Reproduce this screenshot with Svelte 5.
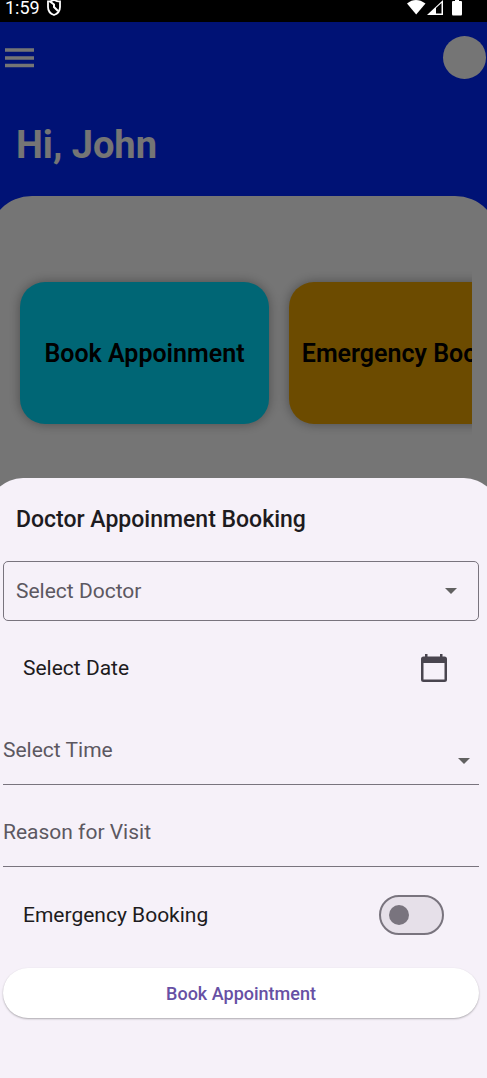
<script>
  let doctor = $state('');
  let time = $state('');
  let reason = $state('');
  let emergency = $state(false);

  const cards = [
    { label: 'Book Appoinment', tone: 'cyan' },
    { label: 'Emergency Booking', tone: 'amber' }
  ];
</script>

<div class="app">
  <div class="status">
    <span>1:59</span>
    <svg class="shield" width="14" height="16" viewBox="0 0 14 16" aria-hidden="true">
      <path d="M1 1.5 Q4 1.5 7 0 Q10 1.5 13 1.5 V7 C13 11 10.5 13.8 7 15 C3.500 13.800 1 11 1 7 Z" fill="none" stroke="#fff" stroke-width="1.800" />
      <path d="M3 1.500 L7 4.500 V7 L11 11" fill="none" stroke="#fff" stroke-width="2" />
    </svg>
    <svg class="signals" width="56" height="16" viewBox="0 0 56 16" aria-hidden="true">
      <path d="M0 3.500 C3 1 6 0 9 0 C12 0 15 1 18.500 3.500 L9.200 14.500 Z" fill="#fff" />
      <path d="M20 15 L36 0 V15 Z" fill="#fff" />
      <path d="M29 8 L34.500 3 V13.500 H29 Z" fill="#000" />
      <path d="M46 1 H48 V0 H52 V1 H54 Q55 1 55 2 V14 Q55 15.500 54 15.500 H46 Q45 15.500 45 14 V2 Q45 1 46 1 Z" fill="#fff" />
    </svg>
  </div>

  <div class="home">
    <header>
      <div class="bar">
        <button class="menu" aria-label="Menu">
          <svg width="29" height="20" viewBox="0 0 29 20" aria-hidden="true">
            <path d="M0 2 H29 M0 10 H29 M0 17.500 H29" stroke="#fff" stroke-width="3.500" />
          </svg>
        </button>
        <button class="avatar" aria-label="Profile"></button>
      </div>
      <h1>Hi, John</h1>
    </header>
    <main>
      <div class="cards">
        {#each cards as card}
          <button class="card {card.tone}">{card.label}</button>
        {/each}
      </div>
    </main>
    <div class="scrim"></div>
  </div>

  <form class="sheet" onsubmit={(e) => e.preventDefault()}>
    <h2>Doctor Appoinment Booking</h2>

    <div class="field outlined">
      <select aria-label="Select Doctor" bind:value={doctor}>
        <option value="">Select Doctor</option>
      </select>
      <svg width="12" height="6" viewBox="0 0 12 6" aria-hidden="true"><path d="M0 0 H12 L6 6 Z" fill="#616161" /></svg>
    </div>

    <button type="button" class="row">
      <span>Select Date</span>
      <svg width="26" height="28" viewBox="0 0 26 28" aria-hidden="true">
        <path fill-rule="evenodd" d="M4 0 H6.500 V2.500 H19 V0 H21.500 V2.500 H23.500 Q26 2.500 26 5 V25.500 Q26 28 23.500 28 H2.500 Q0 28 0 25.500 V5 Q0 2.500 2.500 2.500 H4 Z M2.500 9 V25.500 H23.500 V9 Z" fill="#49454f" />
      </svg>
    </button>

    <div class="field lined time">
      <select aria-label="Select Time" bind:value={time}>
        <option value="">Select Time</option>
      </select>
      <svg width="12" height="6" viewBox="0 0 12 6" aria-hidden="true"><path d="M0 0 H12 L6 6 Z" fill="#616161" /></svg>
    </div>

    <div class="field lined">
      <input type="text" aria-label="Reason for Visit" placeholder="Reason for Visit" bind:value={reason} />
    </div>

    <label class="row toggle">
      <span>Emergency Booking</span>
      <input type="checkbox" role="switch" bind:checked={emergency} />
    </label>

    <button class="submit">Book Appointment</button>
  </form>
</div>

<style>
  :global(body) {
    margin: 0;
    background: #757575;
  }
  .app {
    position: relative;
    display: flex;
    flex-direction: column;
    min-height: 100vh;
    overflow: hidden;
    font-family: Roboto, sans-serif;
    font-size: 21px;
    color: #1d1b20;
  }
  .app * {
    box-sizing: border-box;
  }
  button,
  select,
  input {
    margin: 0;
    padding: 0;
    border: 0;
    background: none;
    font: inherit;
    color: inherit;
  }
  svg {
    display: block;
    flex: none;
  }
  .status {
    display: flex;
    align-items: flex-start;
    height: 22px;
    padding: 0 24px 0 5px;
    background: #000;
    color: #fff;
    font-size: 18px;
    line-height: 16px;
  }
  .shield {
    margin-left: 7px;
  }
  .signals {
    margin-left: auto;
  }
  .home {
    position: relative;
    flex: 1;
    display: flex;
    flex-direction: column;
    background: #0029ff;
  }
  header {
    padding: 14px 1px 27px 5px;
    color: #fff;
  }
  .bar {
    display: flex;
    align-items: center;
    justify-content: space-between;
  }
  .avatar {
    width: 43px;
    height: 43px;
    border-radius: 50%;
    background: #fff;
  }
  h1 {
    margin: 42px 0 0 11px;
    font-size: 38px;
    line-height: 48px;
    font-weight: 700;
  }
  main {
    flex: 1;
    margin: 0 -12px;
    padding: 66px 27px 0 20px;
    border-radius: 44px 44px 0 0;
    background: #fff;
  }
  .cards {
    display: flex;
    gap: 20px;
    padding: 20px 12px;
    overflow: hidden;
  }
  .card {
    flex: none;
    width: 249px;
    height: 142px;
    border-radius: 25px;
    box-shadow: 0 0 12px rgba(0, 0, 0, 0.35);
    color: #000;
    font-size: 25px;
    font-weight: 600;
    white-space: nowrap;
  }
  .cyan {
    background: #00dfff;
  }
  .amber {
    background: #eca400;
  }
  .scrim {
    position: absolute;
    inset: 0;
    background: rgba(0, 0, 0, 0.54);
  }
  .sheet {
    position: absolute;
    left: -12px;
    right: -12px;
    bottom: 0;
    display: flex;
    flex-direction: column;
    padding: 27px 20px 60px 15px;
    border-radius: 35px 35px 0 0;
    background: #f6f1f9;
  }
  h2 {
    margin: 0 0 26px 13px;
    font-size: 23px;
    line-height: 30px;
    font-weight: 500;
  }
  .field {
    display: grid;
    align-items: center;
    color: #49454f;
  }
  .field > * {
    grid-area: 1 / 1;
  }
  .field svg {
    justify-self: end;
    pointer-events: none;
  }
  .field select,
  .field input {
    width: 100%;
    height: 100%;
    appearance: none;
    outline: none;
    color: #5c5861;
  }
  .field input::placeholder {
    color: #5c5861;
    opacity: 1;
  }
  .outlined {
    height: 60px;
    border: 1px solid #79747e;
    border-radius: 5px;
  }
  .outlined select {
    padding-left: 12px;
  }
  .outlined svg {
    margin-right: 21px;
  }
  .row {
    display: flex;
    align-items: center;
    justify-content: space-between;
    height: 94px;
    padding: 0 32px 0 20px;
    text-align: left;
  }
  .lined {
    height: 70px;
    border-bottom: 1px solid #79747e;
  }
  .lined + .lined {
    margin-top: 12px;
  }
  .time svg {
    margin: 22px 9px 0 0;
  }
  .toggle {
    height: 96px;
    padding-right: 35px;
  }
  .toggle input {
    display: flex;
    align-items: center;
    width: 65px;
    height: 40px;
    padding: 0 8px;
    appearance: none;
    border: 2px solid #79747e;
    border-radius: 20px;
    background: #e6e0e9;
  }
  .toggle input::before {
    content: '';
    width: 20px;
    height: 20px;
    border-radius: 50%;
    background: #79747e;
  }
  .toggle input:checked {
    justify-content: flex-end;
  }
  .submit {
    height: 50px;
    margin-top: 5px;
    border-radius: 25px;
    background: #fff;
    box-shadow: 0 1px 2px rgba(0, 0, 0, 0.3);
    color: #6750a4;
    font-size: 18px;
    font-weight: 500;
  }
</style>
